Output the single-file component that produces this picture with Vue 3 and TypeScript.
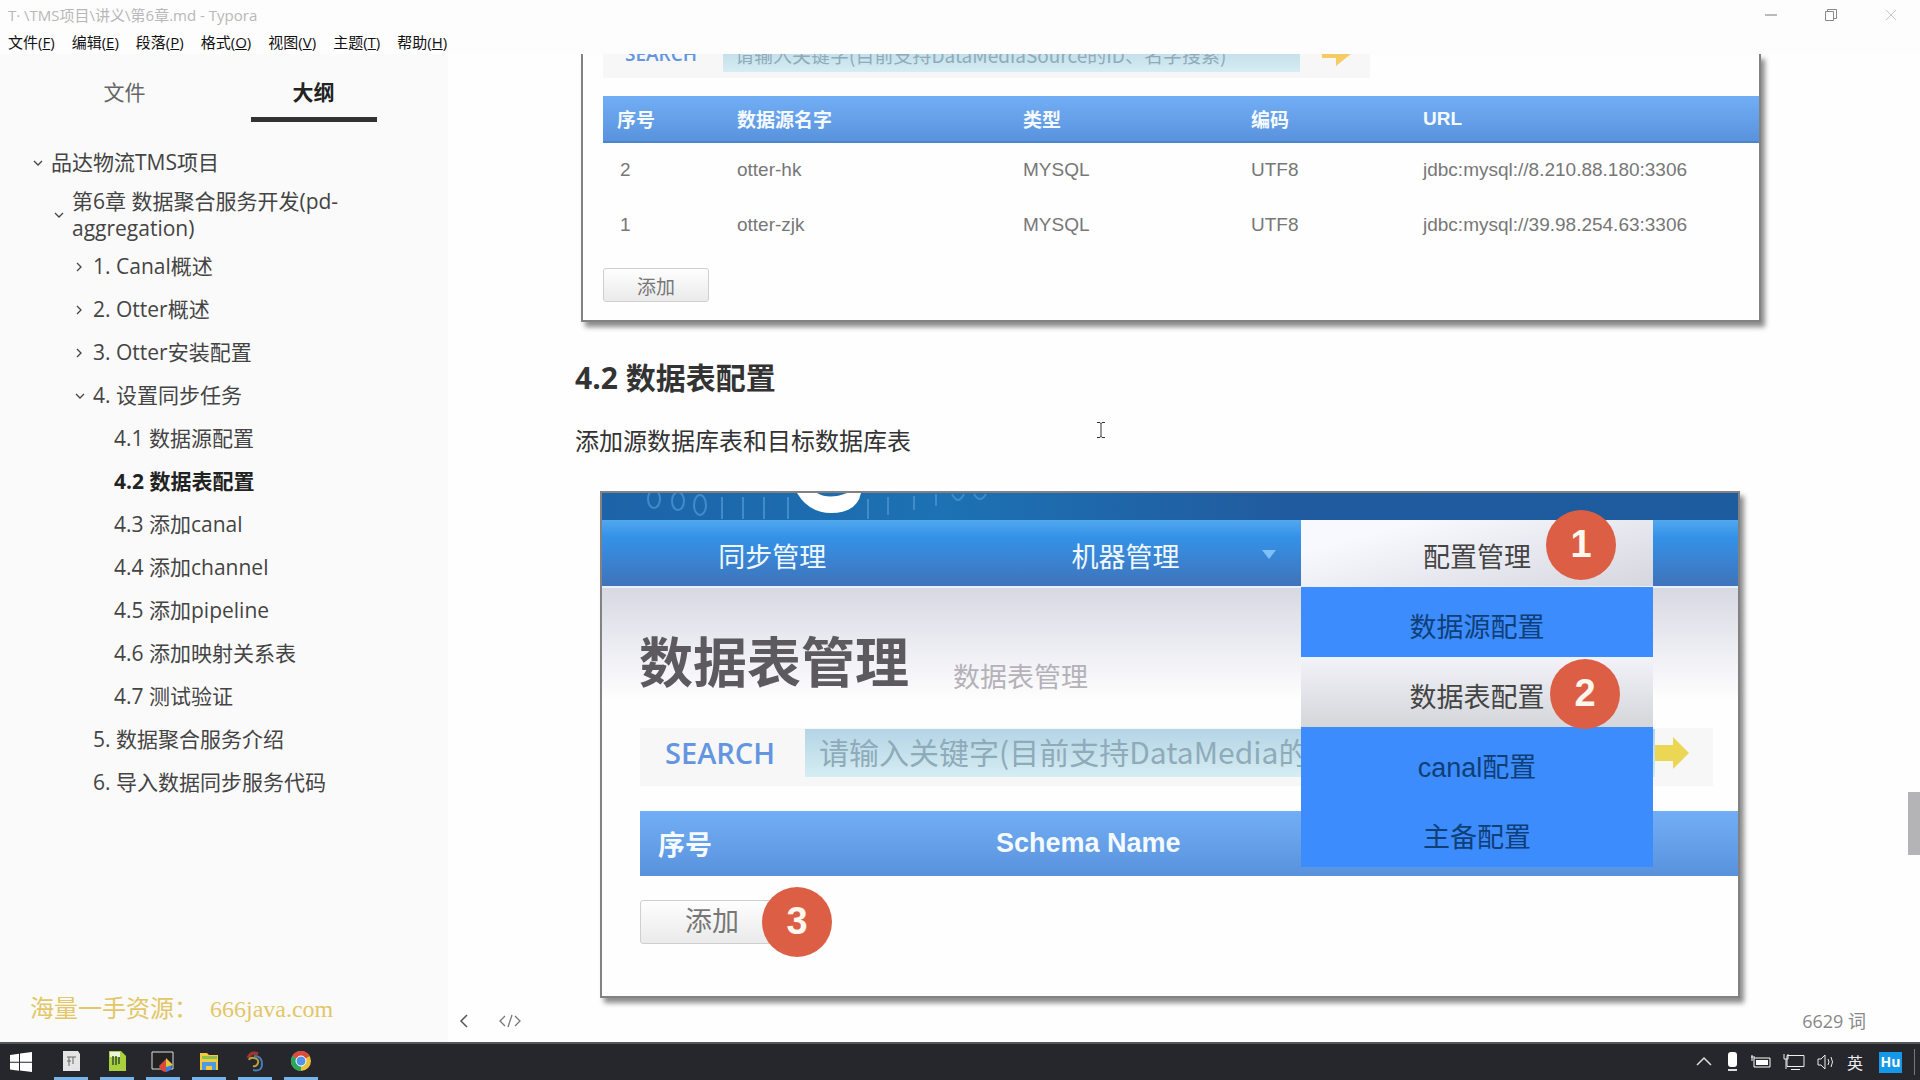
<script setup lang="ts">
interface MenuEntry {
  label: string
  key: string
}

interface OutlineEntry {
  text: string
  level: number
  arrow?: 'open' | 'closed'
  active?: boolean
  wrap?: boolean
}

interface Source {
  id: number
  name: string
  type: string
  encoding: string
  url: string
}

const menus: MenuEntry[] = [
  { label: '文件', key: 'F' },
  { label: '编辑', key: 'E' },
  { label: '段落', key: 'P' },
  { label: '格式', key: 'O' },
  { label: '视图', key: 'V' },
  { label: '主题', key: 'T' },
  { label: '帮助', key: 'H' },
]

const outline: OutlineEntry[] = [
  { text: '品达物流TMS项目', level: 1, arrow: 'open' },
  { text: '第6章 数据聚合服务开发(pd-aggregation)', level: 2, arrow: 'open', wrap: true },
  { text: '1. Canal概述', level: 3, arrow: 'closed' },
  { text: '2. Otter概述', level: 3, arrow: 'closed' },
  { text: '3. Otter安装配置', level: 3, arrow: 'closed' },
  { text: '4. 设置同步任务', level: 3, arrow: 'open' },
  { text: '4.1 数据源配置', level: 4 },
  { text: '4.2 数据表配置', level: 4, active: true },
  { text: '4.3 添加canal', level: 4 },
  { text: '4.4 添加channel', level: 4 },
  { text: '4.5 添加pipeline', level: 4 },
  { text: '4.6 添加映射关系表', level: 4 },
  { text: '4.7 测试验证', level: 4 },
  { text: '5. 数据聚合服务介绍', level: 3 },
  { text: '6. 导入数据同步服务代码', level: 3 },
]

const sources: Source[] = [
  { id: 2, name: 'otter-hk', type: 'MYSQL', encoding: 'UTF8', url: 'jdbc:mysql://8.210.88.180:3306' },
  { id: 1, name: 'otter-zjk', type: 'MYSQL', encoding: 'UTF8', url: 'jdbc:mysql://39.98.254.63:3306' },
]
</script>

<template>
  <div class="window">
    <header class="titlebar">
      <span class="caption">T· \TMS项目\讲义\第6章.md - Typora</span>
      <div class="window-buttons">
        <button type="button" aria-label="最小化">
          <svg width="14" height="14" viewBox="0 0 14 14"><path d="M1 7h12" stroke="#777" /></svg>
        </button>
        <button type="button" aria-label="还原">
          <svg width="14" height="14" viewBox="0 0 14 14" fill="none" stroke="#888"><path d="M1.500 3.500h8v9h-8zM3.500 3.500v-2h9v9h-3" /></svg>
        </button>
        <button type="button" aria-label="关闭">
          <svg width="14" height="14" viewBox="0 0 14 14"><path d="M2 2l10 10M12 2L2 12" stroke="#c4c4c4" /></svg>
        </button>
      </div>
    </header>

    <nav class="menubar">
      <button v-for="m in menus" :key="m.key" type="button">{{ m.label }}(<u>{{ m.key }}</u>)</button>
    </nav>

    <div class="body">
      <aside class="sidebar">
        <div class="tabs">
          <button type="button">文件</button>
          <button type="button" class="current">大纲</button>
        </div>
        <nav class="outline">
          <a
            v-for="item in outline"
            :key="item.text"
            href="#"
            :class="['level-' + item.level, { active: item.active, wrap: item.wrap }]"
          >
            <svg v-if="item.arrow" class="arrow" width="10" height="10" viewBox="0 0 10 10" fill="none" stroke="#444" stroke-width="1.300">
              <path v-if="item.arrow === 'open'" d="M1 3l4 4 4-4" />
              <path v-else d="M2 1l4 4-4 4" />
            </svg>
            <span>{{ item.text }}</span>
          </a>
        </nav>
        <p class="watermark">海量一手资源：&nbsp;&nbsp;666java.com</p>
      </aside>

      <main class="editor">
        <article>
          <figure class="shot sources">
            <div class="search-row">
              <label for="source-search">SEARCH</label>
              <input id="source-search" type="text" placeholder="请输入关键字(目前支持DataMediaSource的ID、名字搜索)" />
              <svg width="32" height="32" viewBox="0 0 32 32"><path d="M0 10h14V2l16 13-16 13v-8H0z" fill="#f5cb62" /></svg>
            </div>
            <table>
              <thead>
                <tr><th>序号</th><th>数据源名字</th><th>类型</th><th>编码</th><th>URL</th></tr>
              </thead>
              <tbody>
                <tr v-for="s in sources" :key="s.id">
                  <td>{{ s.id }}</td>
                  <td>{{ s.name }}</td>
                  <td>{{ s.type }}</td>
                  <td>{{ s.encoding }}</td>
                  <td>{{ s.url }}</td>
                </tr>
              </tbody>
            </table>
            <button type="button" class="add">添加</button>
          </figure>

          <h4>4.2 数据表配置</h4>
          <p class="para">添加源数据库表和目标数据库表</p>

          <figure class="shot tables">
            <div class="banner">
              <svg width="420" height="27" viewBox="0 0 420 27" fill="none">
                <g stroke="#3f8cc8" stroke-width="2">
                  <ellipse cx="52" cy="6" rx="6" ry="9" />
                  <ellipse cx="76" cy="8" rx="6" ry="9" />
                  <ellipse cx="98" cy="12" rx="6" ry="10" />
                  <path d="M120 4v22M141 4v22M162 4v22M186 4v22M266 6v20M286 4v18M312 3v14M334 1v12" />
                  <path d="M350 1q6 12 12 0M372 1q6 10 12 0" />
                </g>
                <path d="M195 0h20q12 7 30 0h14q-4 20-30 20-22 0-34-20z" fill="#fff" />
              </svg>
            </div>
            <nav class="site-nav">
              <a href="#">同步管理</a>
              <a href="#">机器管理<span class="caret"></span></a>
              <a href="#" class="hot">配置管理</a>
              <ul class="dropdown">
                <li><a href="#">数据源配置</a></li>
                <li class="hot"><a href="#">数据表配置</a></li>
                <li><a href="#">canal配置</a></li>
                <li><a href="#">主备配置</a></li>
              </ul>
              <span class="badge one">1</span>
              <span class="badge two">2</span>
            </nav>
            <div class="page-title">
              <strong>数据表管理</strong>
              <span>数据表管理</span>
            </div>
            <div class="search-row">
              <label for="table-search">SEARCH</label>
              <input id="table-search" type="text" placeholder="请输入关键字(目前支持DataMedia的ID、名字搜索)" />
              <svg width="36" height="36" viewBox="0 0 36 36"><path d="M0 10h18V2l16 16-16 16v-8H0z" fill="#ecd755" /></svg>
            </div>
            <table>
              <thead>
                <tr><th>序号</th><th>Schema Name</th></tr>
              </thead>
            </table>
            <div class="add-row">
              <button type="button" class="add">添加</button>
              <span class="badge three">3</span>
            </div>
          </figure>

          <svg class="ibeam" width="10" height="18" viewBox="0 0 10 18" fill="none" stroke="#333"><path d="M1 1.500h3l1 1 1-1h3M5 2v14M1 16.500h3l1-1 1 1h3" /></svg>
        </article>

        <footer class="status">
          <button type="button" aria-label="侧边栏">
            <svg width="10" height="14" viewBox="0 0 10 14" fill="none" stroke="#555" stroke-width="1.500"><path d="M8 1L2 7l6 6" /></svg>
          </button>
          <button type="button" aria-label="源代码模式">
            <svg width="22" height="14" viewBox="0 0 22 14" fill="none" stroke="#777" stroke-width="1.300"><path d="M6 2L1 7l5 5M16 2l5 5-5 5M13 1L9 13" /></svg>
          </button>
          <span class="count">6629 词</span>
        </footer>
        <div class="scroll-thumb"></div>
      </main>
    </div>

    <footer class="taskbar">
      <button type="button" class="start" aria-label="开始">
        <svg width="22" height="20" viewBox="0 0 22 20" fill="#fff"><path d="M0 3l9-1.300v8H0zM10 1.500L22 0v9.700H10zM0 10.700h9v8L0 17.400zM10 10.700h12V20l-12-1.500z" /></svg>
      </button>
      <div class="apps">
        <button type="button" aria-label="Typora">
          <svg width="22" height="22" viewBox="0 0 22 22"><path d="M3 1h15l2 3v17H3z" fill="#e4e4e4" /><path d="M7 7h9M9 7v9M13 7v7M7 11h4" stroke="#666" fill="none" /></svg>
        </button>
        <button type="button" aria-label="Notepad++">
          <svg width="22" height="22" viewBox="0 0 22 22"><path d="M3 1h12l5 5v15H3z" fill="#a8cf3c" /><path d="M4 2h10v5H4z" fill="#eef4d8" /><path d="M7 6v9M10 6v9M13 7v7" stroke="#35502a" stroke-width="1.500" /></svg>
        </button>
        <button type="button" aria-label="录屏">
          <svg width="24" height="24" viewBox="0 0 24 24"><path d="M1 2h21v17H1z" fill="#222" stroke="#ddd" /><path d="M15 9l-7 7a8 8 0 0 0 7 6z" fill="#d94a3d" /><path d="M15 9v13a7 7 0 0 0 6-6z" fill="#3b7de0" /><path d="M15 8l7 7-7 2z" fill="#e8c53b" /></svg>
        </button>
        <button type="button" aria-label="资源管理器">
          <svg width="22" height="22" viewBox="0 0 22 22"><path d="M2 3h7l2 2h9v15H2z" fill="#f3c93f" /><path d="M4 6h15v3H4z" fill="#8cc152" /><path d="M4 18v-6h14v8h-4v-4H8v4H4z" fill="#4c9be0" /></svg>
        </button>
        <button type="button" aria-label="JetBrains">
          <svg width="22" height="22" viewBox="0 0 22 22" fill="none"><path d="M4 8q3-7 10-4" stroke="#a5352c" stroke-width="3" /><path d="M10 6q8 0 8 8t-9 6" stroke="#4a7bb5" stroke-width="2" /><path d="M5 10q1-3 5-2 5 1 4 5t-5 3" stroke="#b8a23c" stroke-width="2" /></svg>
        </button>
        <button type="button" aria-label="Chrome">
          <svg width="22" height="22" viewBox="0 0 22 22"><circle cx="11" cy="11" r="10" fill="#e8c33a" /><path d="M11 11L2.300 6A10 10 0 0 1 19.700 6z" fill="#dd4b3e" /><path d="M11 11L2.300 6A10 10 0 0 0 11 21z" fill="#2da55d" /><circle cx="11" cy="11" r="5" fill="#4f93ea" stroke="#fff" /></svg>
        </button>
      </div>
      <div class="tray">
        <svg width="18" height="22" viewBox="0 0 18 22" fill="none" stroke="#ddd" stroke-width="1.500"><path d="M2 14l7-7 7 7" /></svg>
        <svg width="14" height="22" viewBox="0 0 14 22"><rect x="3" y="1" width="9" height="15" rx="3" fill="#fff" /><path d="M3 19h9" stroke="#ddd" stroke-width="2" /></svg>
        <svg width="20" height="22" viewBox="0 0 20 22"><path d="M3 7h16v9H3z" fill="none" stroke="#fff" /><path d="M5 9h12v5H5z" fill="#fff" /><path d="M0 6h4M1 4v6" stroke="#fff" /></svg>
        <svg width="22" height="22" viewBox="0 0 22 22" fill="none" stroke="#eee"><path d="M4 4.500h17v11H4zM8 18.500h9M1 3v5h4V3M3 8v10" /></svg>
        <svg width="18" height="22" viewBox="0 0 18 22" fill="none" stroke="#eee"><path d="M1 8h3l4-4v14l-4-4H1zM11 8q2 3 0 6M14 6q3 5 0 10" /></svg>
        <span class="ime">英</span>
        <span class="hu">Hu</span>
        <span class="edge"></span>
      </div>
    </footer>
  </div>
</template>

<style>
body {
  margin: 0;
  background: #fdfdfd;
}
</style>

<style scoped>
* {
  box-sizing: border-box;
}

button {
  padding: 0;
  border: 0;
  background: none;
  color: inherit;
  font: inherit;
}

a {
  color: inherit;
  text-decoration: none;
}

svg {
  display: block;
  flex: none;
}

.window {
  display: flex;
  flex-direction: column;
  min-height: 100vh;
  color: #333;
  font-family: "Open Sans", "Noto Sans CJK SC", sans-serif;
}

.titlebar {
  display: flex;
  justify-content: space-between;
  align-items: center;
  height: 30px;
  padding: 0 22px 0 8px;
  color: #b8b8b8;
  font-size: 15px;
  line-height: 20px;
}

.window-buttons {
  display: flex;
  gap: 46px;
}

.menubar {
  display: flex;
  gap: 17px;
  height: 24px;
  padding-left: 8px;
  color: #111;
  font-size: 15px;
  line-height: 24px;
}

.body {
  display: flex;
  flex: 1;
}

.sidebar {
  display: flex;
  flex-direction: column;
  flex: none;
  width: 448px;
  background: #fafafa;
}

.tabs {
  display: flex;
  padding: 12px 40px 0 30px;
  color: #666;
  font-size: 21px;
}

.tabs button {
  flex: 1;
  height: 56px;
  padding-bottom: 4px;
  line-height: 52px;
}

.tabs .current {
  color: #222;
  font-weight: 700;
  background: linear-gradient(#333, #333) center bottom / 126px 5px no-repeat;
}

.outline {
  display: flex;
  flex-direction: column;
  padding: 19px 100px 0 30px;
  color: #444;
  font-size: 21px;
  line-height: 27px;
}

.outline a {
  position: relative;
  padding: 8px 0;
}

.outline .wrap {
  padding: 4px 0 3px;
}

.outline .level-1 { margin-left: 21px; }
.outline .level-2 { margin-left: 42px; }
.outline .level-3 { margin-left: 63px; }
.outline .level-4 { margin-left: 84px; }

.outline .active {
  color: #222;
  font-weight: 700;
}

.arrow {
  position: absolute;
  top: calc(50% - 5px);
  left: -18px;
}

.watermark {
  margin: auto 0 18px 30px;
  color: #e3c668;
  font-family: "Liberation Serif", "Noto Sans CJK SC", serif;
  font-size: 24px;
  line-height: 30px;
}

.editor {
  position: relative;
  display: flex;
  flex: 1;
  flex-direction: column;
  min-width: 0;
  background: #fefefe;
}

article {
  position: relative;
  flex: 1;
  padding: 0 139px 0 127px;
}

.shot {
  margin: 0;
  border: 2px solid #828282;
  background: #fefefe;
  box-shadow: 4px 5px 5px rgba(0, 0, 0, 0.450);
  font-family: "Liberation Sans", "Noto Sans CJK SC", sans-serif;
}

.search-row {
  display: flex;
  align-items: center;
  background: #f7f7f8;
}

.search-row label {
  color: #6495e0;
  font-family: "Open Sans", sans-serif;
  font-weight: 600;
}

.search-row input {
  flex: 1;
  min-width: 0;
  border: 0;
  background: linear-gradient(#b4d4e6, #d6edf2);
  font-family: "Noto Sans CJK SC", sans-serif;
}

.search-row input::placeholder {
  color: #8fabba;
  opacity: 1;
}

.shot table {
  border-collapse: collapse;
  table-layout: fixed;
  width: 100%;
}

.shot thead {
  background: linear-gradient(#72aef6, #5892dc);
}

.shot th,
.shot td {
  padding: 0;
  text-align: left;
  white-space: nowrap;
}

.shot th {
  color: #f4faff;
  font-weight: 700;
}

.add {
  display: block;
  border: 1px solid #cfcfcf;
  border-radius: 3px;
  background: linear-gradient(#fefefe, #eaeaea);
  color: #777;
}

/* data source screenshot, scrolled partly out of view */
.sources {
  overflow: hidden;
  margin: 0 20px 0 6px;
  padding-left: 20px;
  padding-bottom: 18px;
  border-top: 0;
  font-size: 19px;
}

.sources .search-row {
  gap: 22px;
  height: 48px;
  margin: -24px 389px 18px 0;
  padding: 0 16px 0 22px;
}

.sources .search-row label {
  flex: 0 0 76px;
}

.sources .search-row input {
  height: 36px;
  padding: 0 12px;
  font-size: 19px;
}

.sources th {
  height: 46px;
  border-bottom: 2px solid #4b86cc;
}

.sources td {
  height: 55px;
  color: #777;
}

.sources th:nth-child(1) { width: 134px; padding-left: 14px; }
.sources th:nth-child(2) { width: 286px; }
.sources th:nth-child(3) { width: 228px; }
.sources th:nth-child(4) { width: 172px; }
.sources td:nth-child(1) { padding-left: 17px; }

.sources .add {
  width: 106px;
  height: 34px;
  margin-top: 16px;
}

h4 {
  margin: 35px 0 24px;
  font-size: 30px;
  font-weight: 700;
  line-height: 42px;
}

.para {
  margin: 0 0 32px;
  font-size: 24px;
  line-height: 36px;
}

/* table configuration screenshot */
.tables {
  margin: 0 41px 0 25px;
  padding-bottom: 52px;
  font-size: 27px;
}

.banner {
  height: 27px;
  background: linear-gradient(90deg, #1d63a8, #1c72b4 30%, #215b9f 60%, #1d5c9e);
}

.site-nav {
  position: relative;
  display: grid;
  grid-template-rows: 66px;
  grid-template-columns: 341fr 359fr 353fr 85fr;
  height: 68px;
  border-bottom: 2px solid #e4f0fc;
  background: linear-gradient(#52a8ee, #3492e8 25%, #3f73ba);
  color: #f0f8ff;
}

.site-nav > a {
  position: relative;
  padding-top: 10px;
  line-height: 56px;
  text-align: center;
}

.site-nav > .hot {
  background: linear-gradient(165deg, #f8f8ff 20%, #d6d6de);
  color: #444;
}

.caret {
  position: absolute;
  top: 30px;
  right: 25px;
  border: 7px solid transparent;
  border-top: 9px solid #7fc0f6;
  border-bottom: 0;
}

.dropdown {
  z-index: 1;
  grid-row: 1;
  grid-column: 3;
  align-self: start;
  margin: 67px 0 0;
  padding: 0;
  background: #3d8cfd;
  color: #0f3f78;
  list-style: none;
  text-align: center;
}

.site-nav > a:nth-of-type(1) { grid-area: 1 / 1; }
.site-nav > a:nth-of-type(2) { grid-area: 1 / 2; padding-left: 8px; }
.site-nav > a:nth-of-type(3) { grid-area: 1 / 3; }

.dropdown a {
  display: block;
  padding-top: 12px;
  line-height: 58px;
}

.dropdown .hot {
  border-top: 2px solid #eef4ff;
  background: linear-gradient(#f2f2f8, #d4d6da);
  color: #444;
}

.dropdown .hot a {
  padding-top: 10px;
}

.badge {
  position: absolute;
  z-index: 2;
  width: 70px;
  height: 70px;
  border-radius: 50%;
  background: #dc5f45;
  color: #fff8ec;
  font-size: 38px;
  font-weight: 700;
  line-height: 68px;
  text-align: center;
}

.badge.one {
  top: -10px;
  right: 122px;
}

.badge.two {
  top: 139px;
  right: 118px;
}

.badge.three {
  top: -13px;
  left: 122px;
}

.page-title {
  display: flex;
  gap: 44px;
  height: 140px;
  padding: 36px 0 0 37px;
  background: linear-gradient(#d8d8e2, #f0f0f6 50%, #fefefe 80%);
}

.page-title strong {
  color: #5c5a5e;
  font-size: 54px;
  font-weight: 700;
  line-height: 80px;
}

.page-title span {
  padding-top: 28px;
  color: #b4b2b8;
  line-height: 52px;
}

.tables .search-row {
  height: 58px;
  margin: 0 25px 25px 38px;
  padding: 0 22px 8px 25px;
}

.tables .search-row label {
  flex: 0 0 140px;
  font-size: 29px;
  line-height: 40px;
}

.tables .search-row input {
  height: 48px;
  padding: 0 14px 4px;
  font-size: 30px;
}

.tables table {
  width: calc(100% - 38px);
  margin-left: 38px;
}

.tables th {
  height: 65px;
}

.tables th:nth-child(1) { width: 356px; padding-left: 18px; }

.add-row {
  position: relative;
  margin: 24px 0 0 38px;
}

.tables .add {
  width: 140px;
  height: 44px;
  padding-left: 4px;
  line-height: 42px;
}

.ibeam {
  position: absolute;
  top: 367px;
  left: 648px;
}

.status {
  display: flex;
  align-items: center;
  gap: 30px;
  height: 42px;
  padding: 0 54px 0 11px;
  color: #888;
  font-size: 18px;
  line-height: 24px;
}

.count {
  margin-left: auto;
}

.scroll-thumb {
  position: absolute;
  top: 738px;
  right: 0;
  width: 12px;
  height: 63px;
  background: #b4b3b6;
}

.taskbar {
  display: flex;
  align-items: center;
  height: 38px;
  padding: 0 5px 0 10px;
  border-top: 2px solid #55555a;
  background: #26262d;
}

.start {
  width: 22px;
}

.apps {
  display: flex;
  gap: 12px;
  height: 100%;
  margin-left: 22px;
}

.apps button {
  display: flex;
  justify-content: center;
  width: 34px;
  padding-top: 6px;
  border-bottom: 3px solid #76b4ea;
}

.tray {
  display: flex;
  align-items: center;
  gap: 12px;
  height: 100%;
  margin-left: auto;
}

.ime {
  color: #eee;
  font-size: 16px;
}

.hu {
  width: 23px;
  height: 21px;
  margin-left: 4px;
  background: #1698e8;
  color: #fff;
  font-size: 14px;
  font-weight: 700;
  line-height: 20px;
  text-align: center;
}

.edge {
  width: 1px;
  height: 26px;
  background: #777;
}
</style>
